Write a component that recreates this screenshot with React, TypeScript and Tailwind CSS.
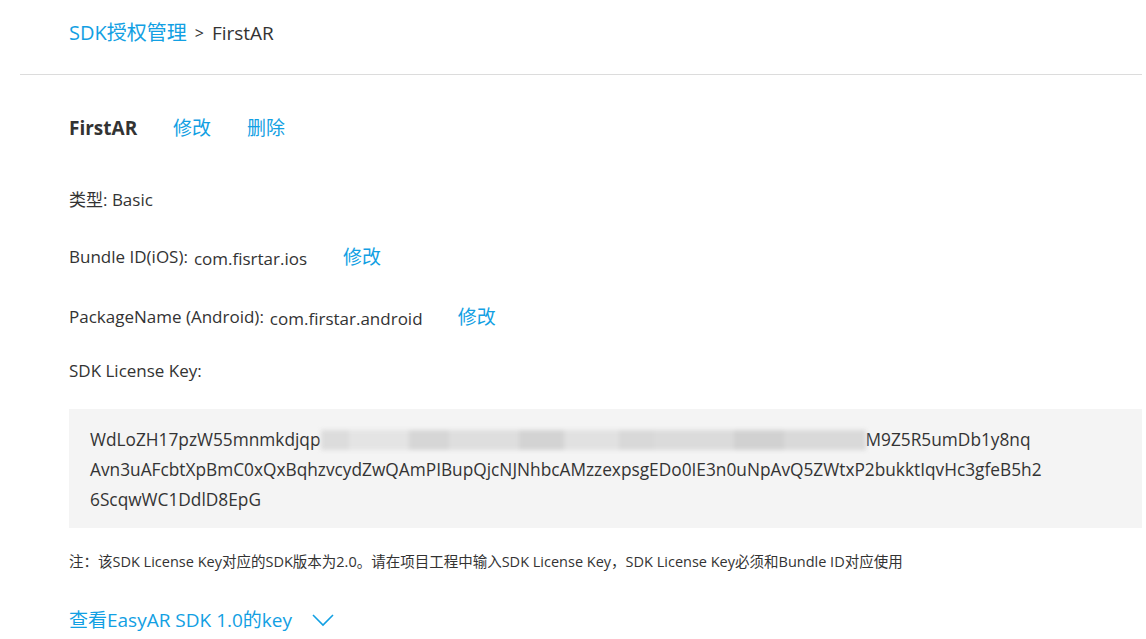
import React from "react";

const font = { fontFamily: '"Open Sans", "Noto Sans CJK SC", sans-serif' };

function Blurred() {
  const blocks = [
    ["w-[28px]", "bg-[#dcdcdc]"],
    ["w-[60px]", "bg-[#e4e4e4]"],
    ["w-[40px]", "bg-[#d6d6d6]"],
    ["w-[70px]", "bg-[#dedede]"],
    ["w-[45px]", "bg-[#d3d3d3]"],
    ["w-[55px]", "bg-[#e1e1e1]"],
    ["w-[35px]", "bg-[#d8d8d8]"],
    ["w-[80px]", "bg-[#dbdbdb]"],
    ["w-[50px]", "bg-[#d1d1d1]"],
    ["w-[82px]", "bg-[#d9d9d9]"],
  ];
  return (
    <span className="inline-flex h-[20px] align-middle blur-[2px]">
      {blocks.map(([w, c], i) => (
        <span key={i} className={`${w} ${c} h-full`} />
      ))}
    </span>
  );
}

export default function App() {
  return (
    <div className="min-h-[639px] w-[1146px] bg-white text-[#333]" style={font}>
      <div className="flex h-[74px] items-center pl-[69px] pb-[8px] text-[19px]">
        <span className="text-[20px] text-[#12a0e3]">SDK授权管理</span>
        <span className="ml-[8px] mr-[8px] text-[16px]">&gt;</span>
        <span>FirstAR</span>
      </div>
      <div className="ml-[20px] mr-[4px] h-px bg-[#dcdcdc]" />

      <div className="pl-[69px] pr-[4px]">
        <div className="flex h-[24px] items-center mt-[41px] text-[19px] leading-[24px]">
          <span className="w-[104px] font-bold">FirstAR</span>
          <span className="w-[74px] text-[#12a0e3]">修改</span>
          <span className="text-[#12a0e3]">删除</span>
        </div>

        <div className="mt-[50px] text-[17px] leading-[20px]">类型: Basic</div>

        <div className="mt-[35px] flex h-[24px] items-center text-[17px] leading-[24px]">
          <span>Bundle ID(iOS):</span>
          <span className="ml-[6px] mt-[4px] w-[149px]">com.fisrtar.ios</span>
          <span className="text-[19px] text-[#12a0e3]">修改</span>
        </div>

        <div className="mt-[36px] flex h-[24px] items-center text-[17px] leading-[24px]">
          <span>PackageName (Android):</span>
          <span className="ml-[6px] mt-[4px] w-[188px]">com.firstar.android</span>
          <span className="text-[19px] text-[#12a0e3]">修改</span>
        </div>

        <div className="mt-[32px] text-[17px] leading-[20px]">SDK License Key:</div>

        <div className="mt-[28px] h-[119px] bg-[#f4f4f4] pl-[21px] pt-[16px] text-[17.3px] leading-[30px]">
          <div className="flex items-center whitespace-nowrap">
            <span>WdLoZH17pzW55mnmkdjqp</span>
            <Blurred />
            <span>M9Z5R5umDb1y8nq</span>
          </div>
          <div className="whitespace-nowrap">
            Avn3uAFcbtXpBmC0xQxBqhzvcydZwQAmPIBupQjcNJNhbcAMzzexpsgEDo0IE3n0uNpAvQ5ZWtxP2bukktIqvHc3gfeB5h2
          </div>
          <div>6ScqwWC1DdlD8EpG</div>
        </div>

        <div className="mt-[24px] text-[14.5px] leading-[20px]">
          注：该SDK License Key对应的SDK版本为2.0。请在项目工程中输入SDK License Key，SDK License Key必须和Bundle ID对应使用
        </div>

        <div className="mt-[36px] flex h-[24px] items-center text-[19px] leading-[24px] text-[#12a0e3]">
          <span>查看EasyAR SDK 1.0的key</span>
          <svg className="ml-[20px]" width="22" height="14" viewBox="0 0 22 14" fill="none">
            <path d="M1 2l10 10L21 2" stroke="#12a0e3" strokeWidth="1.6" />
          </svg>
        </div>
      </div>
    </div>
  );
}
